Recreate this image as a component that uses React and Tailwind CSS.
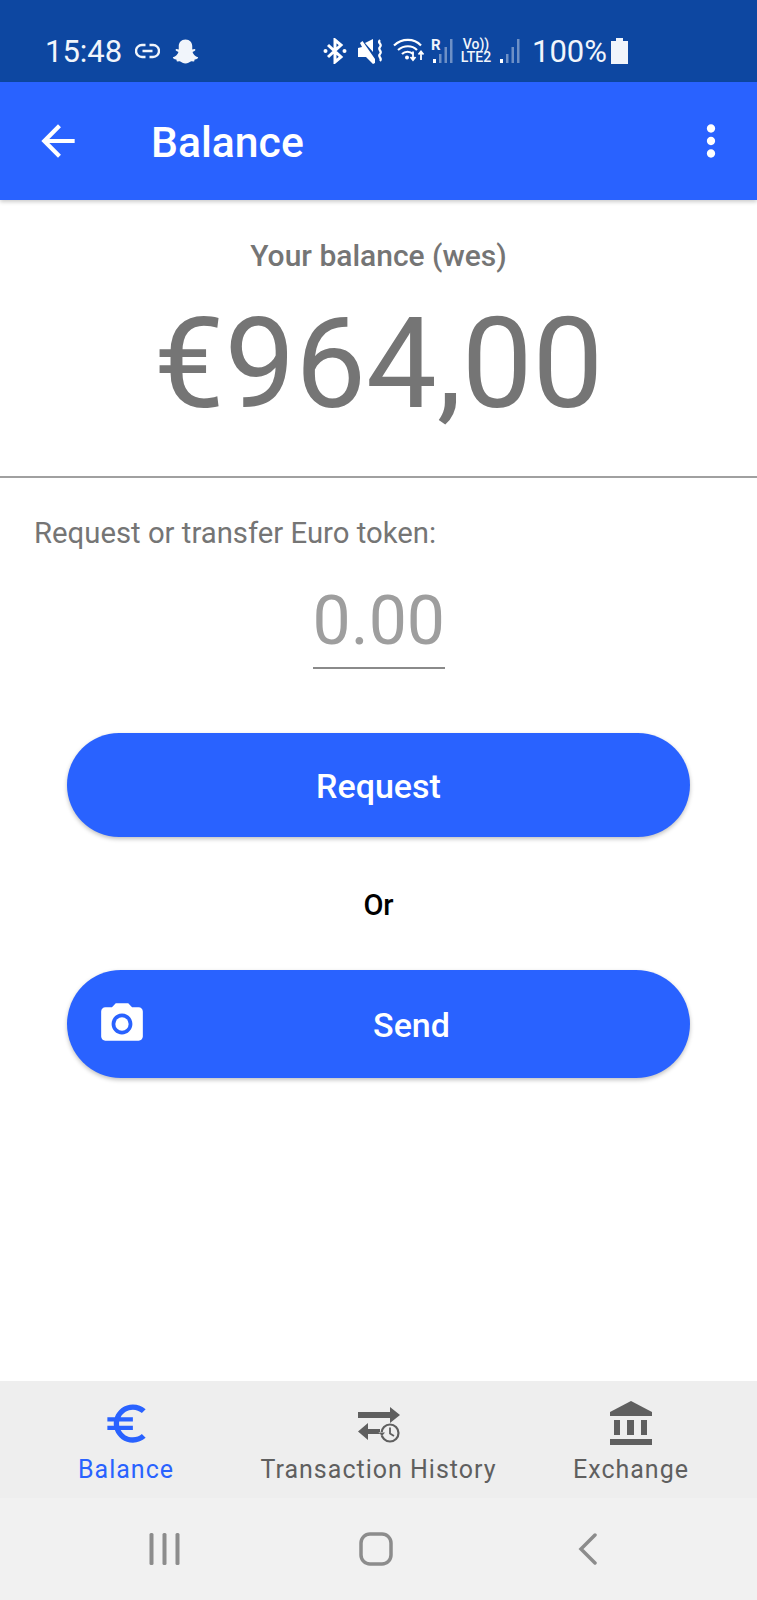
import React from 'react';

const roboto = { fontFamily: 'Roboto, sans-serif' };

// bars of the mobile signal icons, first one bright
const SignalBars = () => (
  <svg className="block" width="22" height="26" viewBox="0 0 22 26">
    <rect x="2" y="21" width="3" height="4" fill="#fff" />
    <rect x="8" y="16" width="2.5" height="9" fill="#fff" opacity="0.4" />
    <rect x="13.500" y="9" width="2.5" height="16" fill="#fff" opacity="0.4" />
    <rect x="19" y="1" width="2.5" height="24" fill="#fff" opacity="0.4" />
  </svg>
);

const StatusBar = () => (
  <div className="h-[82px] bg-[#0d47a1] flex items-center pt-[20px] pl-[45px] text-[#f1f5fb] shrink-0">
    <span className="text-[31px] leading-none font-normal w-[78px]">15:48</span>
    {/* link */}
    <svg className="ml-[12px]" width="25" height="16" viewBox="0 0 25 16" fill="none" stroke="#f1f5fb" strokeWidth="2.400">
      <path d="M10.500 2H7a6 6 0 0 0 0 12h3.500M14.500 2H18a6 6 0 0 1 0 12h-3.500M7.500 8h10" />
    </svg>
    {/* snapchat */}
    <svg className="ml-[12px]" width="27" height="27" viewBox="0 0 28 27" fill="#f1f5fb">
      <path d="M14 1c4.500 0 7 3.200 7 7v3.500l2.500-.5c1 .3 1 1.500-.2 2l-2 1c.8 2.500 2.800 4.500 5.700 5.500.5 1-1 2-3.500 2.300l-.6 2-3-.2c-2 .7-3.500 2.400-5.900 2.400s-3.900-1.700-5.900-2.400l-3 .2-.6-2C2 21.500.500 20.500 1 19.500c2.900-1 4.900-3 5.700-5.500l-2-1c-1.200-.5-1.200-1.700-.2-2L7 11.500V8c0-3.800 2.500-7 7-7z" />
    </svg>

    {/* bluetooth */}
    <svg className="ml-[124px]" width="24" height="26" viewBox="0 0 24 26" fill="none" stroke="#fff" strokeWidth="3">
      <path d="M5 7l13 12-6 5V2l6 5L5 19" />
      <circle cx="2.500" cy="13" r="2" fill="#fff" stroke="none" />
      <circle cx="21.500" cy="13" r="2" fill="#fff" stroke="none" />
    </svg>
    {/* muted */}
    <svg className="ml-[11px]" width="25" height="26" viewBox="0 0 25 26" fill="#fff">
      <path d="M0 10l4-1-2-4 2.500-2L17 21v4l-2 1-7-7H0zM7 5l8-4v13z" />
      <path d="M22 2c-3.500 3 3 4 0 7s3 4 0 7 3 4 0 7" fill="none" stroke="#fff" strokeWidth="2.200" />
    </svg>
    {/* wifi */}
    <svg className="ml-[10px]" width="32" height="26" viewBox="0 0 32 26" fill="none" stroke="#fff" strokeWidth="2.200">
      <path d="M1 7.500c8-7.500 20-7.500 27 0M5 12c6-5 14-5 19 0M9 16c3-3 8-3 11 0" />
      <circle cx="14" cy="19.500" r="2" fill="#fff" stroke="none" />
      <path d="M20 13.500v8M17.500 19l2.500 3 2.500-3M28 22v-8M25.500 16.500l2.500-3 2.500 3" strokeWidth="1.800" />
    </svg>
    <div className="relative w-[22px] h-[26px] ml-[6px]">
      <span className="absolute left-[0px] top-[0px] text-[15px] font-bold leading-none">R</span>
      <SignalBars />
    </div>
    <div className="ml-[7px] flex flex-col items-center w-[32px] text-[14px] leading-[13px] font-medium">
      <span>Vo))</span>
      <span>LTE2</span>
    </div>
    <div className="ml-[6px]"><SignalBars /></div>
    <span className="ml-[12px] w-[73px] text-[31px] leading-none font-normal">100%</span>
    <svg className="ml-[6px]" width="17" height="26" viewBox="0 0 17 26" fill="#f1f5fb">
      <path d="M5 0h7v3h5v23H0V3h5z" />
    </svg>
  </div>
);

const AppBar = () => (
  <div className="h-[118px] bg-[#2962ff] flex items-center text-white shrink-0 shadow-[0_2px_4px_rgba(0,0,0,0.2)] relative">
    <svg className="ml-[33px]" width="50" height="50" viewBox="0 0 24 24" fill="#fff">
      <path d="M20 11H7.830l5.590-5.590L12 4l-8 8 8 8 1.410-1.410L7.830 13H20v-2z" />
    </svg>
    <span className="ml-[68px] mt-[3px] text-[42.700px] leading-none font-medium">Balance</span>
    <svg className="ml-auto mr-[21px]" width="50" height="50" viewBox="0 0 24 24" fill="#fff">
      <path d="M12 8c1.100 0 2-.9 2-2s-.9-2-2-2-2 .9-2 2 .9 2 2 2zm0 2c-1.100 0-2 .9-2 2s.9 2 2 2 2-.9 2-2-.9-2-2-2zm0 6c-1.100 0-2 .9-2 2s.9 2 2 2 2-.9 2-2-.9-2-2-2z" />
    </svg>
  </div>
);

const ActionButton = ({ height, children }) => (
  <button className={`relative w-[623px] ${height} pt-[2px] rounded-full bg-[#2962ff] text-white text-[34px] font-medium leading-none flex items-center justify-center shadow-[0_2px_4px_rgba(0,0,0,0.25)]`}>
    {children}
  </button>
);

const NavItem = ({ label, active, width, children }) => (
  <div className={`flex flex-col items-center ${width}`}>
    <div className="h-[50px] flex items-center justify-center">{children}</div>
    <span className={`mt-[9px] text-[25px] leading-none tracking-[1px] ${active ? 'text-[#2962ff]' : 'text-[#5f5f5f]'}`}>{label}</span>
  </div>
);

export default function App() {
  return (
    <div className="w-[757px] h-[1600px] flex flex-col bg-white overflow-hidden" style={roboto}>
      <StatusBar />
      <AppBar />

      <div className="flex-1 flex flex-col">
        <div className="h-[276px] border-b-2 border-[#a0a0a0] box-content flex flex-col items-center text-[#757575]">
          <span className="mt-[41px] text-[30px] leading-none font-medium">Your balance (wes)</span>
          <span className="mt-[30px] text-[126px] leading-none">€964,00</span>
        </div>

        <p className="mt-[41px] ml-[34px] text-[29.300px] leading-none text-[#757575]">Request or transfer Euro token:</p>

        <div className="self-center mt-[34px] w-[132px] h-[87px] border-b-2 border-[#8a8a8a] text-center text-[68px] leading-[78px] text-[#9e9e9e]">
          0.00
        </div>

        <div className="self-center mt-[64px]">
          <ActionButton height="h-[104px]">Request</ActionButton>
        </div>

        <p className="mt-[54px] mb-[-1px] text-center text-[29px] leading-none font-medium text-black">Or</p>

        <div className="self-center mt-[51px]">
          <ActionButton height="h-[108px]">
            <svg className="absolute left-[30px] top-[29px]" width="50" height="50" viewBox="0 0 24 24" fill="#fff">
              <circle cx="12" cy="12" r="3.200" />
              <path d="M9 2L7.170 4H4c-1.100 0-2 .9-2 2v12c0 1.100.9 2 2 2h16c1.100 0 2-.9 2-2V6c0-1.100-.9-2-2-2h-3.170L15 2H9zm3 15c-2.760 0-5-2.240-5-5s2.240-5 5-5 5 2.240 5 5-2.240 5-5 5z" />
            </svg>
            <span className="ml-[66px]">Send</span>
          </ActionButton>
        </div>
      </div>

      {/* bottom navigation */}
      <div className="h-[117px] bg-[#eeeeee] flex items-start pt-[17px] shrink-0">
        <NavItem label="Balance" active width="w-[252px]">
          <svg width="51" height="51" viewBox="0 0 24 24" fill="#2962ff">
            <path d="M15 18.500c-2.510 0-4.680-1.420-5.760-3.500H15v-2H8.580c-.05-.33-.08-.66-.08-1s.03-.67.08-1H15V9H9.240C10.320 6.920 12.500 5.500 15 5.500c1.610 0 3.090.59 4.230 1.570L21 5.300C19.410 3.870 17.300 3 15 3c-3.920 0-7.240 2.510-8.480 6H3v2h3.060c-.04.33-.06.66-.06 1s.02.67.06 1H3v2h3.520c1.240 3.490 4.560 6 8.480 6 2.310 0 4.410-.87 6-2.300l-1.780-1.770c-1.130.98-2.600 1.570-4.220 1.570z" />
          </svg>
        </NavItem>
        <NavItem label="Transaction History" width="w-[253px]">
          <svg className="mt-[4px]" width="44" height="38" viewBox="0 0 44 38" fill="#5f5f5f">
            <path d="M1 6h32V1l10 8-10 8v-5H1z" />
            <path d="M23 23H11v-6L1 25.500 11 34v-6h12z" />
            <circle cx="33" cy="27" r="8.500" fill="none" stroke="#5f5f5f" strokeWidth="2.200" />
            <path d="M21.500 26l3.500 4 3.500-4z" fill="#eeeeee" />
            <path d="M22 26.500l3 3.500 3-3.500z" />
            <path d="M33 21.500V27.500l4 2.500" fill="none" stroke="#5f5f5f" strokeWidth="1.800" />
          </svg>
        </NavItem>
        <NavItem label="Exchange" width="w-[252px]">
          <svg width="44" height="46" viewBox="0 0 44 46" fill="#5f5f5f">
            <path d="M22 1l21 11v4H1v-4z" />
            <rect x="5" y="20" width="6" height="15" />
            <rect x="18" y="20" width="7" height="15" />
            <rect x="32" y="20" width="6" height="15" />
            <rect x="1" y="39" width="42" height="6" />
          </svg>
        </NavItem>
      </div>

      {/* system navigation */}
      <div className="h-[102px] bg-[#f1f1f1] flex items-center shrink-0 pl-[58px]">
        <div className="w-[212px] flex justify-center">
          <svg width="31" height="32" viewBox="0 0 31 32" fill="#8c8c8c">
            <rect x="0.500" y="0" width="4" height="32" rx="1.500" />
            <rect x="13.500" y="0" width="4" height="32" rx="1.500" />
            <rect x="26.500" y="0" width="4" height="32" rx="1.500" />
          </svg>
        </div>
        <div className="w-[212px] flex justify-center">
          <svg width="34" height="34" viewBox="0 0 34 34" fill="none" stroke="#8c8c8c" strokeWidth="3.500">
            <rect x="2" y="2" width="30" height="30" rx="9" />
          </svg>
        </div>
        <div className="w-[212px] flex justify-center">
          <svg width="20" height="32" viewBox="0 0 20 32" fill="none" stroke="#8c8c8c" strokeWidth="3.500" strokeLinecap="round">
            <path d="M17 2L3 16l14 14" />
          </svg>
        </div>
      </div>
    </div>
  );
}
